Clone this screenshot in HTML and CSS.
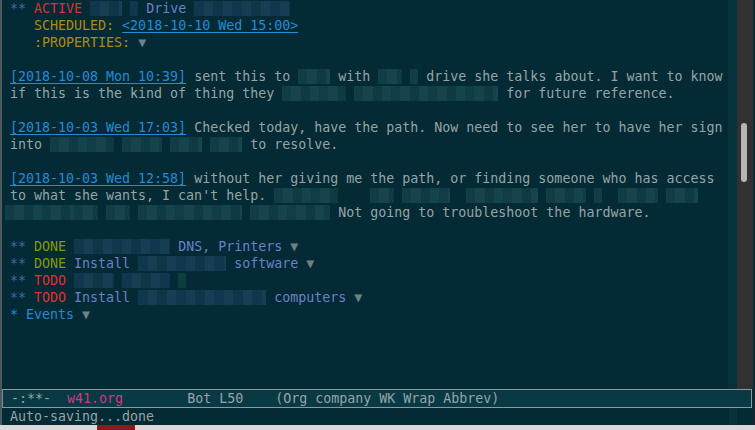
FILE: index.html
```html
<!DOCTYPE html>
<html>
<head>
<meta charset="utf-8">
<link rel="stylesheet" href="styles.css">
</head>
<body>
<div class="screen">
  <div class="emacs">
    <div class="window">
      <div class="edge-l"></div>
      <div class="buffer">
<div class="ln"><span class="star">**</span> <span class="kw-red">ACTIVE</span> <span class="bz hd b4"></span> <span class="bz hd b1"></span> <span class="h2">Drive</span> <span class="bz hd b12"></span></div>
<div class="ln">   <span class="kw-yel">SCHEDULED:</span> <span class="ts">&lt;2018-10-10 Wed 15:00&gt;</span></div>
<div class="ln">   <span class="kw-yel">:PROPERTIES:</span> <span class="tri">▼</span></div>
<div class="ln"> </div>
<div class="ln"><span class="ts">[2018-10-08 Mon 10:39]</span> sent this to <span class="bz b4"></span> with <span class="bz b3"></span> <span class="bz b1"></span> drive she talks about. I want to know</div>
<div class="ln">if this is the kind of thing they <span class="bz b8"></span> <span class="bz b18"></span> for future reference.</div>
<div class="ln"> </div>
<div class="ln"><span class="ts">[2018-10-03 Wed 17:03]</span> Checked today, have the path. Now need to see her to have her sign</div>
<div class="ln">into <span class="bz b8"></span> <span class="bz b5"></span> <span class="bz b4"></span> <span class="bz b4"></span> to resolve.</div>
<div class="ln"> </div>
<div class="ln"><span class="ts">[2018-10-03 Wed 12:58]</span> without her giving me the path, or finding someone who has access</div>
<div class="ln">to what she wants, I can't help. <span class="bz b8"></span>    <span class="bz b3"></span> <span class="bz b6"></span>  <span class="bz b9"></span> <span class="bz b5"></span> <span class="bz b1"></span>  <span class="bz b5"></span> <span class="bz b4"></span></div>
<div class="ln"><span class="bz b8 lead"></span><span class="bz b3"></span> <span class="bz b3"></span> <span class="bz b13"></span> <span class="bz b10"></span> Not going to troubleshoot the hardware.</div>
<div class="ln"> </div>
<div class="ln"><span class="star">**</span> <span class="kw-grn">DONE</span> <span class="bz hd b12"></span> <span class="h2">DNS, Printers</span> <span class="tri">▼</span></div>
<div class="ln"><span class="star">**</span> <span class="kw-grn">DONE</span> <span class="h2">Install</span> <span class="bz hd b11"></span> <span class="h2">software</span> <span class="tri">▼</span></div>
<div class="ln"><span class="star">**</span> <span class="kw-red">TODO</span> <span class="bz hd b5"></span> <span class="bz hd b6"></span> <span class="bz dk b1"></span></div>
<div class="ln"><span class="star">**</span> <span class="kw-red">TODO</span> <span class="h2">Install</span> <span class="bz hd b16"></span> <span class="h2">computers</span> <span class="tri">▼</span></div>
<div class="ln"><span class="star1">*</span> <span class="h1">Events</span> <span class="tri">▼</span></div>
      </div>
      <div class="fringe-r"></div>
      <div class="scroll"><div class="thumb"></div></div>
      <div class="edge-r"></div>
    </div>
    <div class="modeline-row">
      <div class="edge-l"></div>
      <div class="modeline"> -:**-  <span class="fname">w41.org</span>        Bot L50    (Org company WK Wrap Abbrev)</div>
      <div class="edge-r3"></div>
    </div>
    <div class="echo-row">
      <div class="edge-l"></div>
      <div class="echo">Auto-saving...done</div>
      <div class="fringe-e"></div>
      <div class="echo-pad"></div>
      <div class="edge-r3"></div>
    </div>
  </div>
  <div class="desk"><div class="desk-red"></div></div>
</div>
</body>
</html>
```
FILE: styles.css
```css
html, body {
  margin: 0;
  padding: 0;
  background: #d8d8d8;
}
.screen {
  width: 755px;
  height: 430px;
  overflow: hidden;
  display: flex;
  flex-direction: column;
  font-family: "DejaVu Sans Mono", monospace;
  font-size: 13.3px;
  line-height: 17px;
  color: #97a4a4;
}
.emacs {
  height: 425px;
  flex: none;
  display: flex;
  flex-direction: column;
  background: #032a35;
}
.window {
  height: 389px;
  flex: none;
  display: flex;
}
.edge-l {
  width: 2px;
  flex: none;
  background: #4b5a5b;
}
.buffer {
  flex: 1;
  padding-left: 8px;
  overflow: hidden;
}
.ln {
  height: 17px;
  white-space: pre;
}
.fringe-r {
  width: 9px;
  flex: none;
  background: #07313c;
}
.scroll {
  width: 16px;
  flex: none;
  background: #313131;
  position: relative;
}
.thumb {
  position: absolute;
  left: 4px;
  top: 123px;
  width: 6px;
  height: 59px;
  border-radius: 3px;
  background: #b5b5b5;
}
.edge-r {
  width: 2px;
  flex: none;
  background: #0f2730;
}
.edge-r3 {
  width: 3px;
  flex: none;
  background: #0f2730;
}
.modeline-row {
  display: flex;
  height: 19px;
  flex: none;
}
.modeline {
  flex: 1;
  height: 17px;
  background: #083945;
  border: 1px solid #8a9a9a;
  border-left-color: #7d8d8d;
  white-space: pre;
  color: #97a4a4;
}
.fname {
  color: #d33682;
}
.echo-row {
  display: flex;
  height: 17px;
  flex: none;
}
.echo {
  flex: 1;
  padding-left: 8px;
  white-space: pre;
}
.fringe-e {
  width: 8px;
  flex: none;
  background: #07313c;
}
.echo-pad {
  width: 15px;
  flex: none;
}
.desk {
  height: 5px;
  flex: none;
  background: #d9d9d9;
  display: flex;
  padding-left: 97px;
}
.desk-red {
  width: 38px;
  background: #8e1b1b;
}

/* org faces */
.star { color: #3a6cab; }
.star1 { color: #268bd2; }
.kw-red { color: #dc322f; }
.kw-grn { color: #859900; }
.kw-yel { color: #b08a10; }
.h2 { color: #6c80c8; }
.h1 { color: #268bd2; }
.ts { color: #268bd2; text-decoration: underline; text-underline-offset: 2px; }
.tri { color: #6d8283; }

/* blurred (redacted) blocks */
.bz {
  display: inline-block;
  height: 15px;
  margin-top: 1px;
  vertical-align: top;
  background: repeating-linear-gradient(90deg, #113d47 0 9px, #16434c 9px 19px, #0f3a44 19px 28px, #14444d 28px 37px);
}
.bz.hd {
  background: repeating-linear-gradient(90deg, #10374d 0 10px, #153e53 10px 19px, #0f3549 19px 29px, #163f55 29px 38px);
}
.bz.dk {
  background: #0d3d3e;
}
.bz.lead {
  margin-left: -5px;
  padding-left: 5px;
}
.b1 { width: 1ch; }
.b3 { width: 3ch; }
.b4 { width: 4ch; }
.b5 { width: 5ch; }
.b6 { width: 6ch; }
.b8 { width: 8ch; }
.b9 { width: 9ch; }
.b10 { width: 10ch; }
.b11 { width: 11ch; }
.b12 { width: 12ch; }
.b13 { width: 13ch; }
.b16 { width: 16ch; }
.b18 { width: 18ch; }
```
